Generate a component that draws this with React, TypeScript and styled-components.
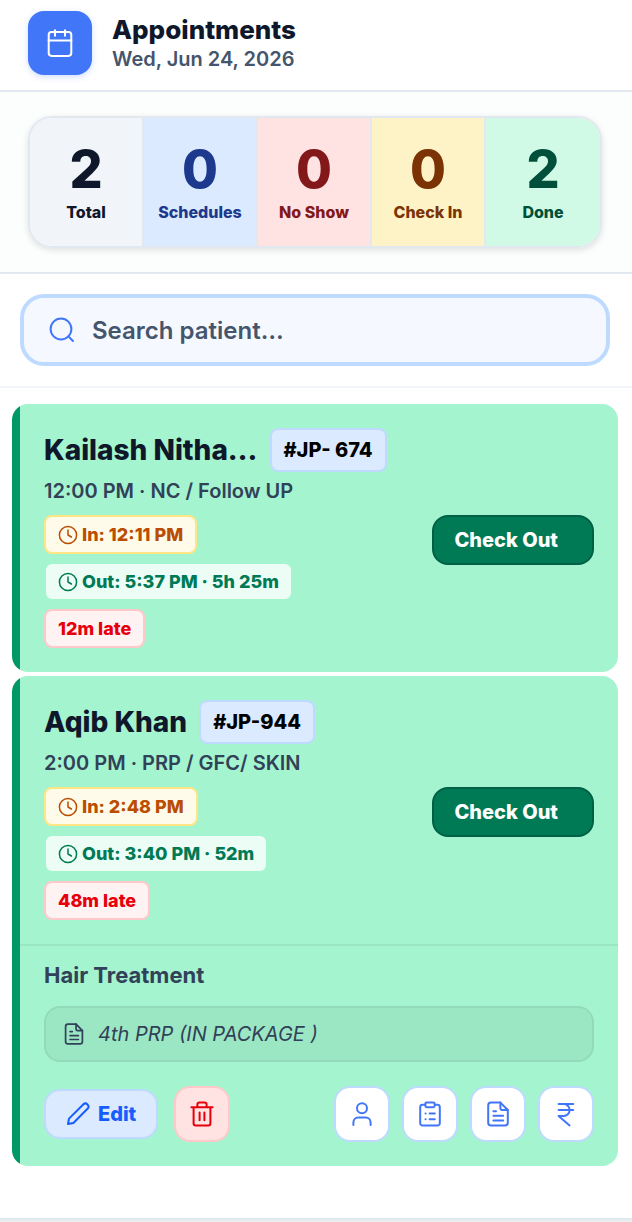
import React from "react";
import styled, { createGlobalStyle } from "styled-components";

const GlobalStyle = createGlobalStyle`
  *, *::before, *::after { box-sizing: border-box; }
  body {
    margin: 0;
    background: #ffffff;
    color: #0f172b;
    font-family: Inter, "Noto Sans", sans-serif;
    font-optical-sizing: none;
  }
  h1, h2, h3, p, ul, dl, dd, dt { margin: 0; padding: 0; }
  button, input { font: inherit; letter-spacing: inherit; font-optical-sizing: none; }
  button { cursor: pointer; }
`;

const Page = styled.main`
  min-height: 100vh;
  display: flex;
  flex-direction: column;
`;

const Header = styled.header`
  display: flex;
  align-items: center;
  gap: 20px;
  padding: 11px 28px 15px;
  border-bottom: 2px solid #e2e8f0;
`;

const Logo = styled.div`
  display: grid;
  place-items: center;
  width: 64px;
  height: 64px;
  border-radius: 16px;
  background: #4176f9;
  color: #ffffff;
  box-shadow: 0 2px 6px rgba(65, 118, 249, 0.25);
`;

const Title = styled.h1`
  font-size: 26px;
  line-height: 32px;
  font-weight: 800;
`;

const DateLine = styled.p`
  font-size: 20px;
  line-height: 26px;
  font-weight: 600;
  color: #45556c;
`;

const StatsSection = styled.section`
  padding: 24px 30px 24px 28px;
  background: #fcfefd;
  border-bottom: 2px solid #e2e8f0;
`;

const StatsGrid = styled.dl`
  display: grid;
  grid-template-columns: repeat(5, 1fr);
  border: 2px solid #e2e8f0;
  border-radius: 24px;
  overflow: hidden;
  box-shadow: 0 2px 6px rgba(0, 0, 0, 0.12);
`;

const Stat = styled.div<{ $bg: string; $fg: string }>`
  display: flex;
  flex-direction: column-reverse;
  align-items: center;
  padding: 24px 0 22px;
  background: ${(p) => p.$bg};
  color: ${(p) => p.$fg};
  border-right: 2px solid #e2e8f0;
  &:last-child { border-right: 0; }
`;

const StatValue = styled.dd`
  font-size: 52px;
  line-height: 56px;
  font-weight: 800;
`;

const StatLabel = styled.dt`
  margin-top: 2px;
  font-size: 16px;
  line-height: 24px;
  font-weight: 800;
  white-space: nowrap;
`;

const SearchForm = styled.form`
  padding: 20px 22px 20px 20px;
  border-bottom: 2px solid #f1f5f9;
`;

const SearchBox = styled.label`
  display: flex;
  align-items: center;
  gap: 16px;
  height: 72px;
  padding: 0 24px;
  border: 4px solid #bedbff;
  border-radius: 24px;
  background: #f5f8ff;
  color: #4176f9;
`;

const SearchInput = styled.input`
  flex: 1;
  min-width: 0;
  padding: 0;
  border: 0;
  outline: 0;
  background: transparent;
  color: #45556c;
  font-size: 24px;
  font-weight: 600;
  &::placeholder { color: #45556c; opacity: 1; }
`;

const List = styled.ul`
  list-style: none;
  display: flex;
  flex-direction: column;
  gap: 4px;
  padding: 16px 14px 52px 12px;
`;

const Card = styled.li`
  padding-left: 8px;
  border-radius: 16px;
  background: linear-gradient(90deg, #009966 8px, #a4f4cf 8px);
`;

const CardMain = styled.div`
  padding: 24px;
`;

const NameRow = styled.div`
  display: flex;
  align-items: center;
  gap: 12px;
`;

const Name = styled.h2`
  font-size: 28px;
  line-height: 44px;
  font-weight: 800;
  white-space: nowrap;
`;

const IdBadge = styled.span`
  padding: 0 12px;
  border: 2px solid #bedbff;
  border-radius: 8px;
  background: #dbeafe;
  color: #000000;
  font-size: 20px;
  line-height: 40px;
  font-weight: 800;
  white-space: nowrap;
`;

const Visit = styled.p`
  margin: 4px 0 8px;
  font-size: 20px;
  line-height: 31px;
  font-weight: 600;
  color: #314158;
`;

const StatusRow = styled.div`
  display: flex;
  align-items: flex-start;
  justify-content: space-between;
`;

const Pills = styled.div`
  display: flex;
  flex-direction: column;
  align-items: flex-start;
  gap: 8px;
`;

const Pill = styled.span<{ $bg: string; $fg: string; $edge: string }>`
  display: inline-flex;
  align-items: center;
  gap: 4px;
  padding: 0 12px;
  border: 2px solid ${(p) => p.$edge};
  border-radius: 8px;
  background: ${(p) => p.$bg};
  color: ${(p) => p.$fg};
  font-size: 18px;
  line-height: 35px;
  font-weight: 800;
`;

const CheckOutButton = styled.button`
  height: 50px;
  padding: 0 34px 0 20px;
  border: 2px solid #006045;
  border-radius: 16px;
  background: #007a55;
  color: #ffffff;
  font-size: 20px;
  font-weight: 800;
`;

const CardDetails = styled.div`
  padding: 12px 24px 24px;
  border-top: 2px solid rgba(0, 0, 0, 0.06);
`;

const Treatment = styled.h3`
  font-size: 22px;
  line-height: 34px;
  font-weight: 700;
  color: #314158;
`;

const Note = styled.p`
  display: flex;
  align-items: center;
  gap: 12px;
  height: 56px;
  margin: 14px 0 24px;
  padding: 0 16px;
  border: 2px solid rgba(0, 0, 0, 0.06);
  border-radius: 16px;
  background: rgba(0, 0, 0, 0.05);
  color: #314158;
  font-size: 20px;
  font-style: italic;
`;

const Actions = styled.div`
  display: flex;
  align-items: center;
  gap: 12px;
`;

const EditButton = styled.button`
  display: flex;
  align-items: center;
  gap: 8px;
  height: 50px;
  margin-right: 4px;
  padding: 0 20px;
  border: 2px solid #bedbff;
  border-radius: 16px;
  background: #dbeafe;
  color: #155dfc;
  font-size: 20px;
  font-weight: 800;
`;

const IconButton = styled.button<{ $danger?: boolean }>`
  display: grid;
  place-items: center;
  width: 56px;
  height: 56px;
  padding: 0;
  border: 2px solid ${(p) => (p.$danger ? "#ffc9c9" : "#bedbff")};
  border-radius: 16px;
  background: ${(p) => (p.$danger ? "#ffe2e2" : "#ffffff")};
  color: ${(p) => (p.$danger ? "#e7000b" : "#4176f9")};
`;

const Spacer = styled.div`
  flex: 1;
`;

const Footer = styled.footer`
  flex: 1;
  min-height: 4px;
  border-top: 2px solid #e2e8f0;
  background: #eceeee;
`;

const Svg = styled.svg`
  display: block;
  flex: none;
  fill: none;
  stroke: currentColor;
  stroke-width: 2;
  stroke-linecap: round;
  stroke-linejoin: round;
`;

type IconProps = { size?: number; children: React.ReactNode };
const Icon = ({ size = 28, children }: IconProps) => (
  <Svg width={size} height={size} viewBox={`0 0 ${size} ${size}`} aria-hidden="true">
    {children}
  </Svg>
);

const CalendarIcon = () => (
  <Icon>
    <rect x="2.7" y="2.9" width="22.6" height="24" rx="2.8" />
    <path d="M2.7 11.6h22.6M9 1.2v5.6M19 1.2v5.6" />
  </Icon>
);

const SearchIcon = () => (
  <Icon>
    <circle cx="13" cy="13" r="10.4" />
    <path d="M20.4 20.4l4.6 4.6" />
  </Icon>
);

const ClockIcon = () => (
  <Icon size={20}>
    <g strokeWidth="1.5">
      <circle cx="10" cy="10" r="8.6" />
      <path d="M10 5v5l3.4 2" />
    </g>
  </Icon>
);

const FileShape = () => (
  <>
    <path d="M16.4 2.6H7a2.8 2.8 0 0 0-2.8 2.8v17.4A2.8 2.8 0 0 0 7 25.6h14a2.8 2.8 0 0 0 2.8-2.8V10z" />
    <path d="M16.4 2.6V8.6a1.4 1.4 0 0 0 1.4 1.4h6M9.4 11.2h2.6M9.4 15.8h9.8M9.4 20.4h9.8" />
  </>
);

const FileIcon = () => (
  <Icon>
    <FileShape />
  </Icon>
);

const NoteIcon = () => (
  <Svg width={24} height={24} viewBox="0 0 28 28" aria-hidden="true">
    <FileShape />
  </Svg>
);

const PencilIcon = () => (
  <Icon size={24}>
    <path d="M2 22l1-5.4L17.2 2.5a3 3 0 0 1 4.3 4.3L7.4 21z" />
  </Icon>
);

const TrashIcon = () => (
  <Icon>
    <path d="M3.4 7.2h21.2M5.6 7.2v16.4a2 2 0 0 0 2 2h12.8a2 2 0 0 0 2-2V7.2M9.4 7.2V4.6a2 2 0 0 1 2-2h5.2a2 2 0 0 1 2 2v2.6M11.6 12.6v7.6M16.4 12.6v7.6" />
  </Icon>
);

const PersonIcon = () => (
  <Icon>
    <circle cx="14" cy="8.3" r="5" />
    <path d="M5.4 25v-2.6a4.8 4.8 0 0 1 4.8-4.8h7.6a4.8 4.8 0 0 1 4.8 4.8V25" />
  </Icon>
);

const ClipboardIcon = () => (
  <Icon>
    <rect x="9.3" y="2.6" width="9.4" height="4.6" rx="1.4" />
    <path d="M9.3 4.8H6.6A2.4 2.4 0 0 0 4.2 7.2v16a2.4 2.4 0 0 0 2.4 2.4h14.8a2.4 2.4 0 0 0 2.4-2.4v-16a2.4 2.4 0 0 0-2.4-2.4h-2.7M9.5 13.4h.1M13.6 13.4h5.2M9.5 19.2h.1M13.6 19.2h5.2" />
  </Icon>
);

const RupeeIcon = () => (
  <Icon>
    <path d="M6.6 4h14.6M6.6 10h14.6M6.6 4h5a6 6 0 0 1 0 12h-5l11 9.4" />
  </Icon>
);

const stats = [
  { label: "Total", value: 2, bg: "#f1f5f9", fg: "#0f172b" },
  { label: "Schedules", value: 0, bg: "#dbeafe", fg: "#1c398e" },
  { label: "No Show", value: 0, bg: "#ffe2e2", fg: "#82181a" },
  { label: "Check In", value: 0, bg: "#fef3c6", fg: "#7b3306" },
  { label: "Done", value: 2, bg: "#d0fae5", fg: "#004f3b" },
];

type Appointment = {
  name: string;
  id: string;
  visit: string;
  checkIn: string;
  checkOut: string;
  late: string;
  treatment?: string;
  note?: string;
};

const appointments: Appointment[] = [
  {
    name: "Kailash Nitha…",
    id: "#JP- 674",
    visit: "12:00 PM · NC / Follow UP",
    checkIn: "In: 12:11 PM",
    checkOut: "Out: 5:37 PM · 5h 25m",
    late: "12m late",
  },
  {
    name: "Aqib Khan",
    id: "#JP-944",
    visit: "2:00 PM · PRP / GFC/ SKIN",
    checkIn: "In: 2:48 PM",
    checkOut: "Out: 3:40 PM · 52m",
    late: "48m late",
    treatment: "Hair Treatment",
    note: "4th PRP (IN PACKAGE )",
  },
];

const AppointmentCard = ({ item }: { item: Appointment }) => (
  <Card>
    <CardMain>
      <NameRow>
        <Name>{item.name}</Name>
        <IdBadge>{item.id}</IdBadge>
      </NameRow>
      <Visit>{item.visit}</Visit>
      <StatusRow>
        <Pills>
          <Pill $bg="#fffbeb" $fg="#bb4d00" $edge="#fee685">
            <ClockIcon />
            {item.checkIn}
          </Pill>
          <Pill $bg="#ecfdf5" $fg="#007a55" $edge="#a4f4cf">
            <ClockIcon />
            {item.checkOut}
          </Pill>
          <Pill $bg="#fef2f2" $fg="#e7000b" $edge="#ffc9c9">
            {item.late}
          </Pill>
        </Pills>
        <CheckOutButton type="button">Check Out</CheckOutButton>
      </StatusRow>
    </CardMain>
    {item.treatment && (
      <CardDetails>
        <Treatment>{item.treatment}</Treatment>
        <Note>
          <NoteIcon />
          {item.note}
        </Note>
        <Actions>
          <EditButton type="button">
            <PencilIcon />
            Edit
          </EditButton>
          <IconButton type="button" $danger aria-label="Delete">
            <TrashIcon />
          </IconButton>
          <Spacer />
          <IconButton type="button" aria-label="Patient profile">
            <PersonIcon />
          </IconButton>
          <IconButton type="button" aria-label="Treatment plan">
            <ClipboardIcon />
          </IconButton>
          <IconButton type="button" aria-label="Documents">
            <FileIcon />
          </IconButton>
          <IconButton type="button" aria-label="Payments">
            <RupeeIcon />
          </IconButton>
        </Actions>
      </CardDetails>
    )}
  </Card>
);

export default function App() {
  return (
    <Page>
      <GlobalStyle />
      <Header>
        <Logo>
          <CalendarIcon />
        </Logo>
        <div>
          <Title>Appointments</Title>
          <DateLine>Wed, Jun 24, 2026</DateLine>
        </div>
      </Header>
      <StatsSection aria-label="Summary">
        <StatsGrid>
          {stats.map((s) => (
            <Stat key={s.label} $bg={s.bg} $fg={s.fg}>
              <StatLabel>{s.label}</StatLabel>
              <StatValue>{s.value}</StatValue>
            </Stat>
          ))}
        </StatsGrid>
      </StatsSection>
      <SearchForm role="search">
        <SearchBox>
          <SearchIcon />
          <SearchInput type="search" placeholder="Search patient…" aria-label="Search patient" />
        </SearchBox>
      </SearchForm>
      <List>
        {appointments.map((a) => (
          <AppointmentCard key={a.id} item={a} />
        ))}
      </List>
      <Footer />
    </Page>
  );
}
